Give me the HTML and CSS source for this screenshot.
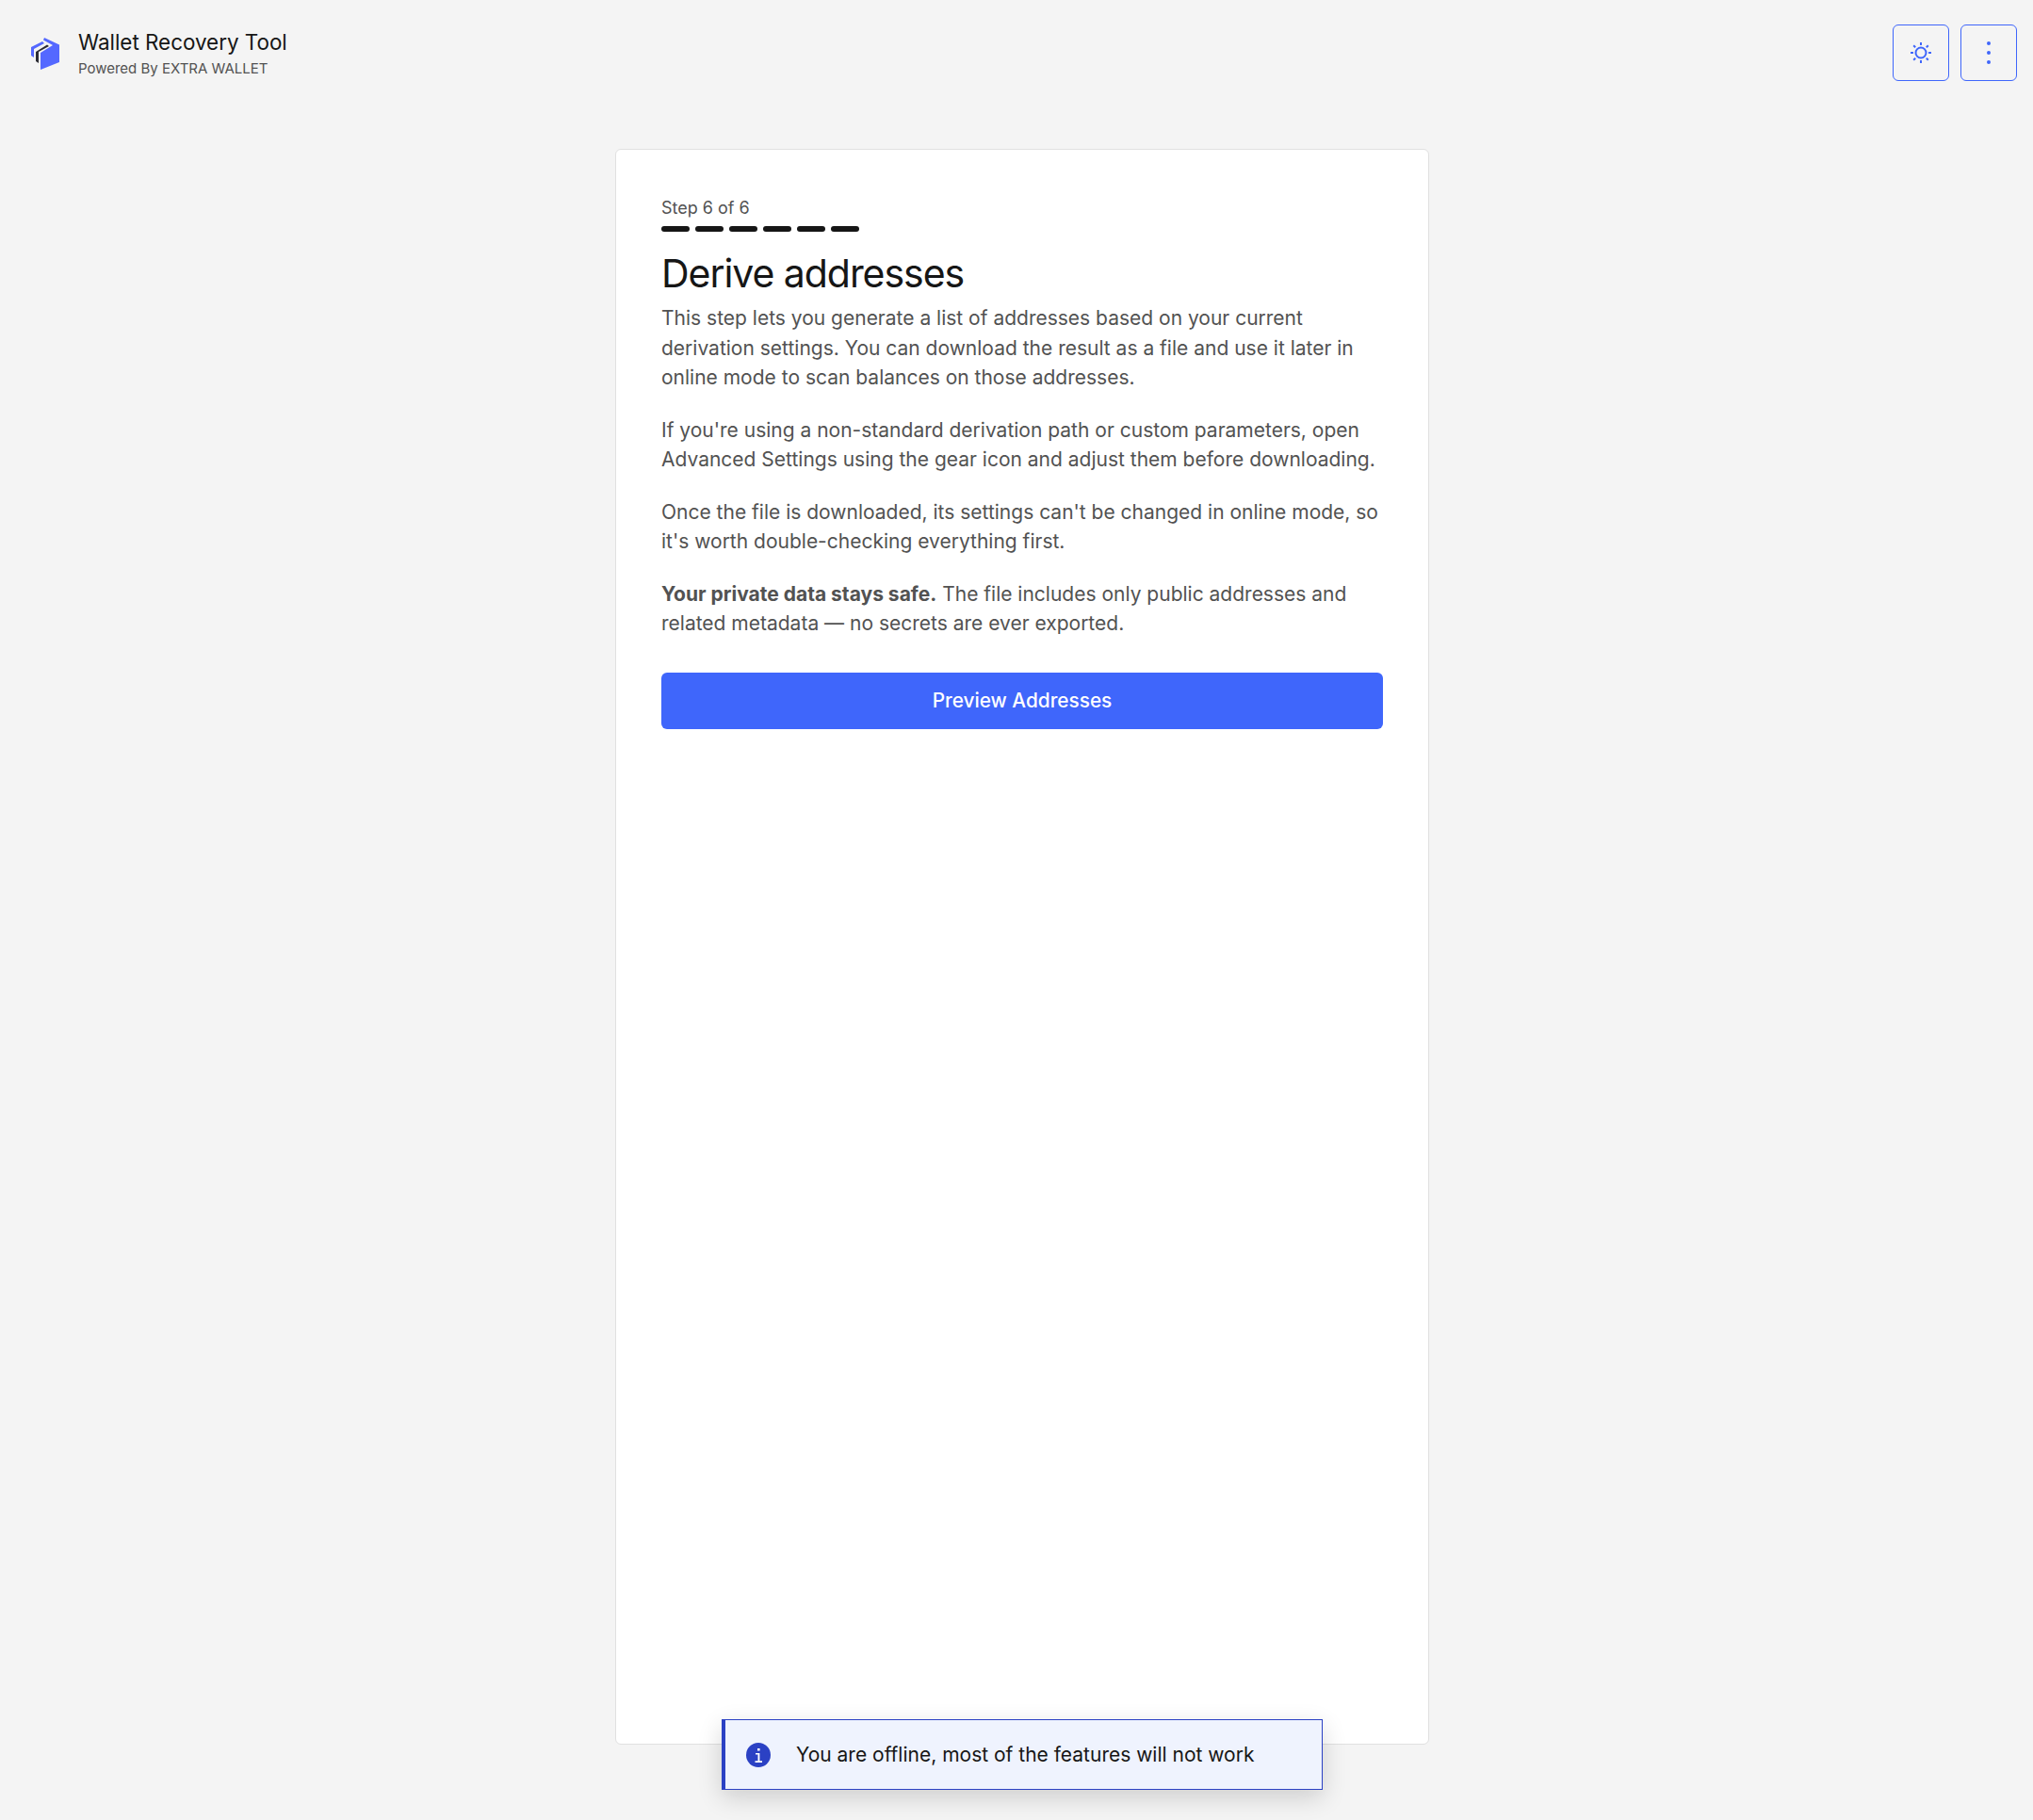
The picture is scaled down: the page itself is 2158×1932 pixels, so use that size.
FILE: index.html
```html
<!DOCTYPE html>
<html lang="en">
<head>
<meta charset="utf-8">
<title>Wallet Recovery Tool</title>
<link rel="stylesheet" href="styles.css">
</head>
<body>
<header class="header">
  <div class="brand">
    <svg class="logo" viewBox="0 0 32 36" width="32" height="36">
      <path fill="#5468ff" d="M16 1 32 8.500V27L12 35V17L25 9 15 3.500Z"/>
      <path fill="#5468ff" d="M2 11 14 5 16 7 5 13V22L2 20Z"/>
      <path fill="#2b2b33" d="M7 16 19 8.500 21 10 10 16V28L7 26Z"/>
    </svg>
    <div class="brand-text">
      <div class="brand-title">Wallet Recovery Tool</div>
      <div class="brand-sub">Powered By EXTRA WALLET</div>
    </div>
  </div>
  <div class="actions">
    <button class="icon-btn" aria-label="Theme">
      <svg viewBox="0 0 24 24" width="24" height="24" fill="none" stroke="#3f66fb" stroke-width="2">
        <circle cx="12" cy="12" r="5.500"/>
        <path d="M12 1v3M12 20v3M1 12h3M20 12h3M4.200 4.200l2 2M17.800 17.800l2 2M4.200 19.800l2-2M17.800 6.200l2-2"/>
      </svg>
    </button>
    <button class="icon-btn" aria-label="More">
      <svg viewBox="0 0 24 24" width="24" height="24" fill="#3f66fb">
        <circle cx="12" cy="2" r="2"/><circle cx="12" cy="12" r="2"/><circle cx="12" cy="22" r="2"/>
      </svg>
    </button>
  </div>
</header>
<main class="main">
  <section class="card">
    <div class="step-label">Step 6 of 6</div>
    <div class="steps">
      <span class="step"></span><span class="step"></span><span class="step"></span><span class="step"></span><span class="step"></span><span class="step"></span>
    </div>
    <h1 class="title">Derive addresses</h1>
    <p class="para">This step lets you generate a list of addresses based on your current derivation settings. You can download the result as a file and use it later in online mode to scan balances on those addresses.</p>
    <p class="para">If you're using a non-standard derivation path or custom parameters, open Advanced Settings using the gear icon and adjust them before downloading.</p>
    <p class="para">Once the file is downloaded, its settings can't be changed in online mode, so it's worth double-checking everything first.</p>
    <p class="para"><strong>Your private data stays safe.</strong> The file includes only public addresses and related metadata — no secrets are ever exported.</p>
    <button class="primary">Preview Addresses</button>
  </section>
</main>
<div class="toast">
  <svg class="toast-icon" viewBox="0 0 26 26" width="26" height="26">
    <circle cx="13" cy="13" r="13" fill="#2b41c4"/>
    <path fill="#fff" d="M12 6h2.600v2.600H12zM10 11h4.400v8.300H17V21H9.500v-1.700h3V12.600H10z"/>
  </svg>
  <span class="toast-text">You are offline, most of the features will not work</span>
</div>
</body>
</html>
```
FILE: styles.css
```css
* { box-sizing: border-box; }
html, body { margin: 0; height: 100%; }
body {
  background: #f4f4f4;
  font-family: Inter, "Liberation Sans", sans-serif;
  color: #161616;
  height: 1932px;
  overflow: hidden;
}
.header {
  height: 112px;
  padding: 26px 17px 26px 31px;
  display: flex;
  justify-content: space-between;
  align-items: center;
}
.brand { display: flex; align-items: center; gap: 20px; }
.logo { display: block; margin-top: 1px; }
.brand-title { font-size: 22.400px; line-height: 30px; }
.brand-sub { font-size: 15px; line-height: 21px; margin-top: 2px; color: #525252; }
.actions { display: flex; gap: 12px; }
.icon-btn {
  width: 60px;
  height: 60px;
  padding: 0;
  background: transparent;
  border: 1.5px solid #3f66fb;
  border-radius: 6px;
  display: flex;
  align-items: center;
  justify-content: center;
}
.main { display: flex; justify-content: center; padding-top: 46px; padding-left: 12px; }
.card {
  width: 864px;
  height: 1694px;
  background: #fff;
  border: 1px solid #e0e0e0;
  border-radius: 6px;
  padding: 48px;
}
.step-label { font-size: 18px; line-height: 28px; color: #525252; }
.steps { display: flex; gap: 6px; margin-top: 5px; }
.step { width: 30px; height: 6px; border-radius: 3px; background: #161616; }
.title { font-size: 41px; font-weight: 400; line-height: 50px; margin: 19px 0 0; letter-spacing: -1.050px; }
.para { font-size: 21px; line-height: 31.500px; color: #525252; margin: 0 0 24px; }
.para strong { font-weight: 700; }
.title + .para { margin-top: 7px; }
.primary {
  display: block;
  width: 100%;
  height: 60px;
  margin-top: 36px;
  background: #3f66fb;
  color: #fff;
  border: none;
  border-radius: 6px;
  font-family: inherit;
  font-size: 20.800px;
  font-weight: 500;
}
.toast {
  position: absolute;
  left: 766px;
  top: 1825px;
  width: 638px;
  height: 75px;
  background: #eff3fe;
  border: 1.500px solid #2b41c4;
  border-left: 4px solid #2b41c4;
  display: flex;
  align-items: center;
  padding-left: 22px;
  gap: 27px;
  box-shadow: 0 8px 24px rgba(0,0,0,.16);
}
.toast-text { font-size: 21px; color: #161616; }
```
